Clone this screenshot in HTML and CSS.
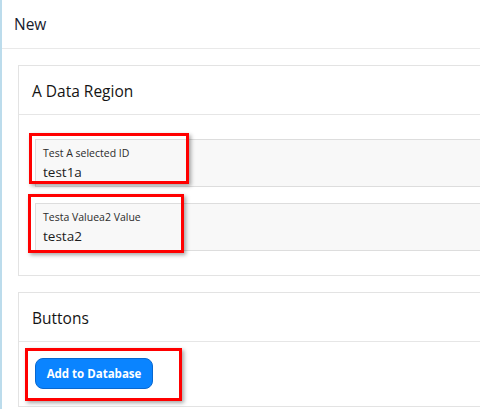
FILE: index.html
```html
<!DOCTYPE html>
<html>
<head>
<meta charset="utf-8">
<link rel="stylesheet" href="styles.css">
</head>
<body>
<div class="page">
  <div class="topbar">New</div>
  <div class="content">
    <div class="card">
      <div class="card-header">A Data Region</div>
      <div class="card-body stack">
        <div class="field">
          <div class="label">Test A selected ID</div>
          <div class="value">test1a</div>
          <div class="mark mark1"></div>
        </div>
        <div class="field">
          <div class="label">Testa Valuea2 Value</div>
          <div class="value">testa2</div>
          <div class="mark mark2"></div>
        </div>
      </div>
    </div>
    <div class="card">
      <div class="card-header">Buttons</div>
      <div class="card-body buttons">
        <div class="btn-wrap">
          <button class="btn">Add to Database</button>
          <div class="mark mark3"></div>
        </div>
      </div>
    </div>
  </div>
</div>
</body>
</html>
```
FILE: styles.css
```css
html, body {
  margin: 0;
  padding: 0;
  overflow: hidden;
  background: #ffffff;
}
body {
  font-family: "Segoe UI", "Open Sans", "Noto Sans", sans-serif;
  color: #212529;
}
.page {
  width: 640px;
  min-height: 409px;
  border-left: 2px solid #bcdcec;
}
.topbar {
  height: 49px;
  box-sizing: border-box;
  padding: 13px 0 0 12px;
  font-size: 15.5px;
  line-height: 22px;
  font-weight: 500;
  color: #17202e;
  border-bottom: 1px solid #e9e9e9;
}
.content {
  padding: 16px 0 0 16px;
  display: flex;
  flex-direction: column;
  gap: 16px;
}
.card {
  border: 1px solid #e3e3e3;
  border-right: none;
}
.card-header {
  height: 49px;
  box-sizing: border-box;
  padding: 14px 0 0 13px;
  font-size: 15.5px;
  line-height: 22px;
  font-weight: 500;
  color: #141414;
  border-bottom: 1px solid #e6e6e6;
}
.card-body {
  padding: 24px 0 24px 16px;
}
.stack {
  display: flex;
  flex-direction: column;
  gap: 16px;
}
.field {
  position: relative;
  height: 48px;
  box-sizing: border-box;
  background: #f8f8f8;
  border: 1px solid #dddddd;
  border-right: none;
  padding: 6px 0 0 7px;
}
.label {
  font-size: 10.5px;
  line-height: 15px;
  color: #2b2b2b;
}
.value {
  font-size: 13.5px;
  line-height: 22px;
  color: #1c1c1c;
}
.buttons {
  padding: 16px 0 17px 16px;
}
.btn-wrap {
  position: relative;
  width: 118px;
}
.btn {
  display: block;
  width: 118px;
  height: 31px;
  box-sizing: border-box;
  background: #0a84ff;
  border: 1px solid #0868d0;
  border-radius: 8px;
  color: #ffffff;
  font-family: inherit;
  font-weight: 700;
  font-size: 11.5px;
  padding: 0;
}
.mark {
  position: absolute;
  box-sizing: border-box;
  border: 3px solid #ff0000;
  box-shadow: 2px 2px 4px rgba(0, 0, 0, 0.35);
}
.mark1 {
  left: -7px;
  top: -7px;
  width: 160px;
  height: 51px;
}
.mark2 {
  left: -8px;
  top: -10px;
  width: 156px;
  height: 59px;
}
.mark3 {
  left: -10px;
  top: -10px;
  width: 157px;
  height: 53px;
}
```
